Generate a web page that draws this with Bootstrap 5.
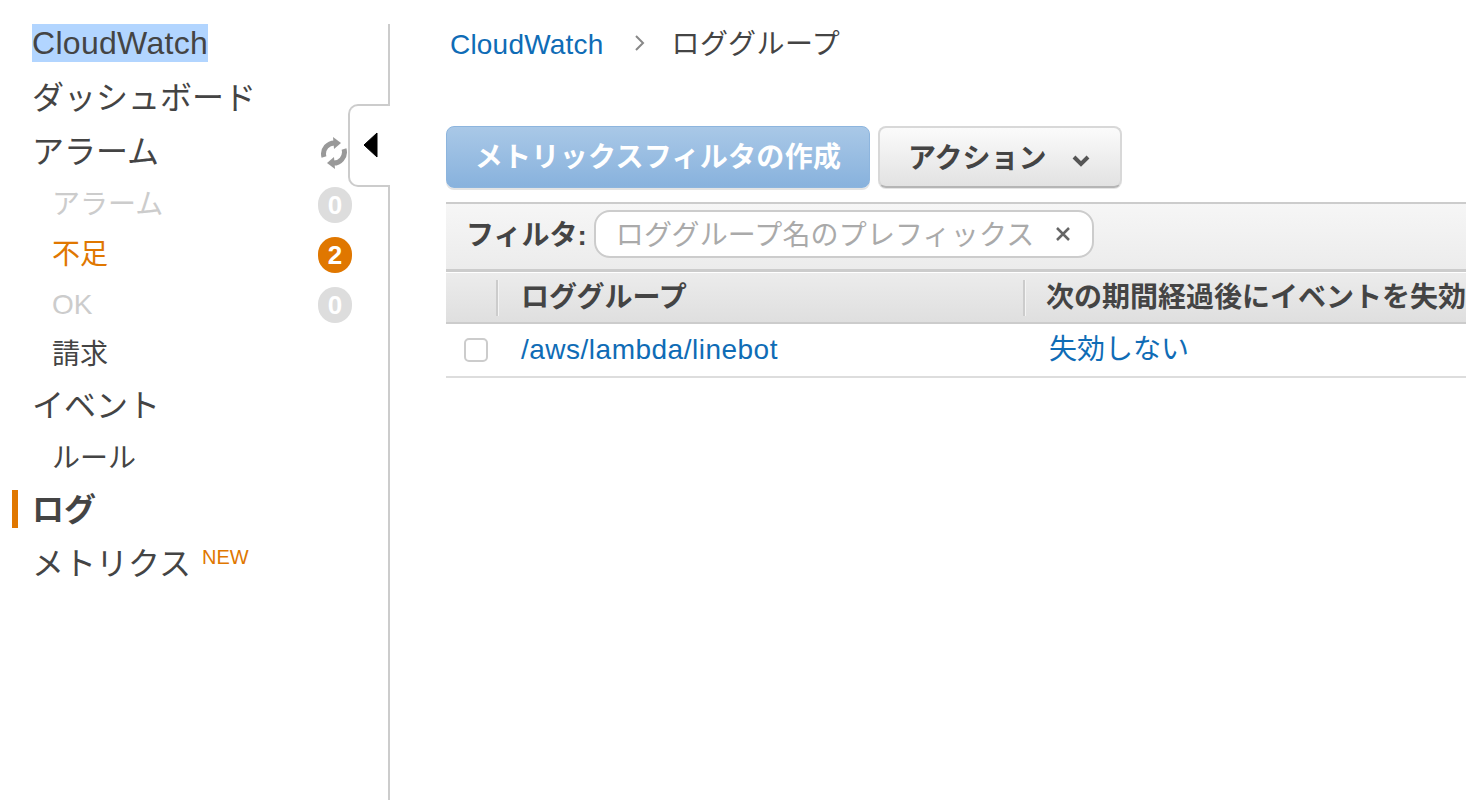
<!DOCTYPE html>
<html lang="ja">
<head>
<meta charset="utf-8">
<title>CloudWatch</title>
<link rel="stylesheet" href="https://cdn.jsdelivr.net/npm/bootstrap@5.3.0/dist/css/bootstrap.min.css">
<style>
html,body{height:800px;overflow:hidden}
body{font-family:"Liberation Sans","Noto Sans CJK JP",sans-serif;color:#444;background:#fff}
.shell{height:800px;overflow:hidden}
.side{width:390px;flex:none;height:776px;margin-top:24px;border-right:2px solid #ccc;position:relative;padding-left:12px}
.side-row{padding-left:20px;padding-right:36px;font-size:32px;line-height:38px;height:54px;color:#444}
.side-first{height:55px}
.side-first span.sel{background:#b2d5ff;letter-spacing:.3px;padding:1px 0}
.side-alarm{height:52px}
.side-sub{padding-left:40px;font-size:28px;height:50px;line-height:36px;padding-top:2px}
.side-bill{height:52px}
.side-rule{height:52px}
.tone-off{color:#ccc}
.tone-warn{color:#e07700}
.side-active{font-weight:700;border-left:6px solid #e07700;padding-left:14px;height:38px;line-height:40px;margin-top:1px;margin-bottom:17px}
.count{width:34px;height:36px;border-radius:18px;background:#ddd;color:#fff;font-weight:700;font-size:26px;line-height:36px;text-align:center}
.count-warn{background:#e07700}
.new-tag{font-size:20px;line-height:20px;color:#e07700;margin-left:11px;position:relative;top:-11px}
.spin{margin-right:4px;position:relative;top:2px}
.tab-toggle{position:absolute;left:348px;top:80px;width:42px;height:83px;background:#fff;border:2px solid #ccc;border-right:0;border-radius:10px 0 0 10px;padding-left:13px;padding-bottom:2px}
.main{flex:1;min-width:0;padding-left:56px;overflow:hidden}
.crumb{height:126px;padding:25px 0 0 4px;font-size:28px;line-height:40px;color:#444}
.crumb a{letter-spacing:.2px}
.crumb span{letter-spacing:.5px}
.crumb a,.cell-link{color:#0f6cb6;text-decoration:none}
.crumb-sep{margin:0 24px 0 30px;position:relative;top:-2px}
.btn-make,.btn-act{height:62px;border-radius:8px;font-size:28px;font-weight:700;line-height:62px;padding:0;white-space:nowrap}
.btn-make{width:424px;color:#fff;background:linear-gradient(#a9c8e7,#88b2dd);border:1px solid #8db5de;box-shadow:0 2px 0 #e4e4e4;letter-spacing:.3px}
.btn-act{width:244px;color:#444;background:linear-gradient(#fbfbfb,#e2e2e2);border:2px solid #d8d8d8;border-bottom-color:#b5b5b5;box-shadow:0 1px 0 #e4e4e4;padding-left:28px;text-align:left}
.btn-act svg{margin-left:24px}
.tool{margin-top:14px;height:70px;border-top:2px solid #ccc;border-bottom:3px solid #ccc;background:linear-gradient(#f6f6f6,#ececec);padding-left:20px;padding-bottom:6px;width:1020px;font-size:28px;font-weight:700}
.tool-label{margin-top:4px}
.filter-box{width:500px;height:48px;background:#fff;border:2px solid #ccc;border-radius:16px;margin-left:7px;padding-left:20px;padding-right:22px;font-weight:400;color:#aaa;line-height:48px;white-space:nowrap}
.filter-box>span:first-child{letter-spacing:.15px}
.clear-x{height:44px}
.head-row{height:52px;width:1020px;border-bottom:2px solid #ccc;border-top:1px solid #fff;background:linear-gradient(#ececec,#dfdfdf);font-size:28px;font-weight:700;white-space:nowrap;overflow:hidden}
.col-a{width:50px;flex:none;height:36px}
.col-b{width:527px;flex:none;padding-left:23px;height:36px;line-height:36px;border-left:2px solid #ccc;box-shadow:inset 1px 0 0 #f4f4f4}
.col-c{flex:none;padding-left:21px;height:36px;line-height:36px;border-left:2px solid #ccc;box-shadow:inset 1px 0 0 #f4f4f4}
.body-row{height:54px;width:1020px;border-bottom:2px solid #ddd;font-size:28px;white-space:nowrap}
.box-cell{width:75px;flex:none;padding-left:18px}
.fake-check{width:24px;height:24px;border:2px solid #ccc;border-radius:5px;background:#fff}
.name-cell{width:528px;flex:none}
.name-cell .cell-link{letter-spacing:.5px}
</style>
</head>
<body>
<div class="shell d-flex">
  <aside class="side">
    <div class="side-row side-first"><span class="sel">CloudWatch</span></div>
    <div class="side-row">ダッシュボード</div>
    <div class="side-row side-alarm d-flex justify-content-between align-items-start">
      <span>アラーム</span>
      <svg class="spin" width="28" height="36" viewBox="0 0 28 36" fill="none" stroke="#999" stroke-width="5"><path d="M4 22a11 11 0 0 1 12-14"/><path d="M24 14a11 11 0 0 1-12 14"/><path d="M13 2l8 6-7 6z" fill="#999" stroke="none"/><path d="M15 34l-8-6 7-6z" fill="#999" stroke="none"/></svg>
    </div>
    <div class="side-row side-sub tone-off d-flex justify-content-between"><span>アラーム</span><span class="count">0</span></div>
    <div class="side-row side-sub tone-warn d-flex justify-content-between"><span>不足</span><span class="count count-warn">2</span></div>
    <div class="side-row side-sub tone-off d-flex justify-content-between"><span>OK</span><span class="count">0</span></div>
    <div class="side-row side-sub side-bill">請求</div>
    <div class="side-row side-rule">イベント</div>
    <div class="side-row side-sub">ルール</div>
    <div class="side-row side-active">ログ</div>
    <div class="side-row">メトリクス<span class="new-tag">NEW</span></div>
    <div class="tab-toggle d-flex align-items-center"><svg width="16" height="26" viewBox="0 0 16 26"><path d="M14 1v24L1 13z" fill="#000" stroke="#000" stroke-linejoin="round"/></svg></div>
  </aside>
  <main class="main">
    <div class="crumb d-flex align-items-start">
      <a href="#">CloudWatch</a>
      <svg class="crumb-sep" width="14" height="40" viewBox="0 0 14 40" fill="none" stroke="#888" stroke-width="2"><path d="M3 13l7 7-7 7"/></svg>
      <span>ロググループ</span>
    </div>
    <div class="d-flex gap-2">
      <button type="button" class="btn-make">メトリックスフィルタの作成</button>
      <button type="button" class="btn-act">アクション<svg width="20" height="14" viewBox="0 0 20 14" fill="none" stroke="#555" stroke-width="4"><path d="M3 3l7 7 7-7"/></svg></button>
    </div>
    <div class="tool d-flex align-items-center">
      <span class="tool-label">フィルタ:</span>
      <div class="filter-box d-flex justify-content-between"><span>ロググループ名のプレフィックス</span><span class="clear-x d-flex align-items-center"><svg width="14" height="14" viewBox="0 0 14 14" stroke="#666" stroke-width="2.5"><path d="M1 1l12 12M13 1L1 13"/></svg></span></div>
    </div>
    <div class="head-row d-flex align-items-center">
      <div class="col-a"></div>
      <div class="col-b">ロググループ</div>
      <div class="col-c">次の期間経過後にイベントを失効</div>
    </div>
    <div class="body-row d-flex align-items-center">
      <div class="box-cell"><div class="fake-check"></div></div>
      <div class="name-cell"><a class="cell-link" href="#">/aws/lambda/linebot</a></div>
      <div><a class="cell-link" href="#">失効しない</a></div>
    </div>
  </main>
</div>
</body>
</html>
